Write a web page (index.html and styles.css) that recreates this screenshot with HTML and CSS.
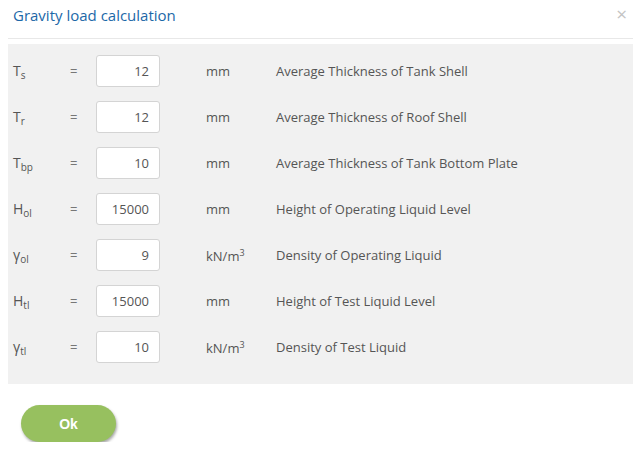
FILE: index.html
```html
<!DOCTYPE html>
<html lang="en">
<head>
  <meta charset="UTF-8" />
  <title>Gravity load calculation</title>
  <link rel="stylesheet" href="styles.css">
</head>
<body>
  <div class="modal">
    <div class="modal-header">
      <h4 class="modal-title">Gravity load calculation</h4>
      <span class="close">&times;</span>
    </div>

    <div class="form-panel">
      <div class="row">
        <div class="sym">T<sub>s</sub></div>
        <div class="eq">=</div>
        <input class="val" type="text" value="12">
        <div class="unit">mm</div>
        <div class="desc">Average Thickness of Tank Shell</div>
      </div>
      <div class="row">
        <div class="sym">T<sub>r</sub></div>
        <div class="eq">=</div>
        <input class="val" type="text" value="12">
        <div class="unit">mm</div>
        <div class="desc">Average Thickness of Roof Shell</div>
      </div>
      <div class="row">
        <div class="sym">T<sub>bp</sub></div>
        <div class="eq">=</div>
        <input class="val" type="text" value="10">
        <div class="unit">mm</div>
        <div class="desc">Average Thickness of Tank Bottom Plate</div>
      </div>
      <div class="row">
        <div class="sym">H<sub>ol</sub></div>
        <div class="eq">=</div>
        <input class="val" type="text" value="15000">
        <div class="unit">mm</div>
        <div class="desc">Height of Operating Liquid Level</div>
      </div>
      <div class="row">
        <div class="sym">&gamma;<sub>ol</sub></div>
        <div class="eq">=</div>
        <input class="val" type="text" value="9">
        <div class="unit">kN/m<sup>3</sup></div>
        <div class="desc">Density of Operating Liquid</div>
      </div>
      <div class="row">
        <div class="sym">H<sub>tl</sub></div>
        <div class="eq">=</div>
        <input class="val" type="text" value="15000">
        <div class="unit">mm</div>
        <div class="desc">Height of Test Liquid Level</div>
      </div>
      <div class="row">
        <div class="sym">&gamma;<sub>tl</sub></div>
        <div class="eq">=</div>
        <input class="val" type="text" value="10">
        <div class="unit">kN/m<sup>3</sup></div>
        <div class="desc">Density of Test Liquid</div>
      </div>
    </div>

    <div class="modal-footer">
      <button class="btn-ok">Ok</button>
    </div>
  </div>
</body>
</html>
```

FILE: styles.css
```css
body {
  font-family: "Open Sans", Arial, sans-serif;
  background: white;
  margin: 0;
  color: #555;
}

.modal {
  padding: 0 11px 0 8px;
}

.modal-header {
  display: flex;
  justify-content: space-between;
  align-items: center;
  height: 38px;
  padding: 0 6px 0 5px;
  border-bottom: 1px solid #e8e8e8;
}

.modal-title {
  margin: 0;
  font-size: 15px;
  font-weight: normal;
  color: #1c68a8;
  position: relative;
  top: -4px;
}

.close {
  color: #c4c4c4;
  font-size: 19px;
  position: relative;
  top: -5px;
}

.form-panel {
  margin-top: 5px;
  background: #f1f1f1;
  padding: 4px 0 14px 5px;
}

.row {
  display: grid;
  grid-template-columns: 57px 26px 64px 46px 70px 1fr;
  align-items: center;
  height: 46px;
  font-size: 13px;
}

.row > input {
  grid-column: 3;
}

.row .unit {
  grid-column: 5;
}

.sym {
  font-size: 14px;
  color: #555;
}

.sym sub {
  font-size: 10px;
  vertical-align: -3px;
}

.eq {
  color: #777;
}

.val {
  box-sizing: border-box;
  width: 64px;
  height: 32px;
  border: 1px solid #d4d4d4;
  border-radius: 3px;
  background: white;
  text-align: right;
  padding: 0 10px;
  font-family: "Open Sans", Arial, sans-serif;
  font-size: 13px;
  color: #555;
}

.unit sup {
  font-size: 9px;
  vertical-align: 5px;
}

.modal-footer {
  padding: 21px 0 0 13px;
}

.btn-ok {
  width: 95px;
  height: 37px;
  border: none;
  border-radius: 19px;
  background: #97c05f;
  color: white;
  font-family: "Liberation Sans", Arial, sans-serif;
  font-weight: bold;
  font-size: 14px;
  box-shadow: 1px 2px 3px rgba(0,0,0,0.35);
}
```
